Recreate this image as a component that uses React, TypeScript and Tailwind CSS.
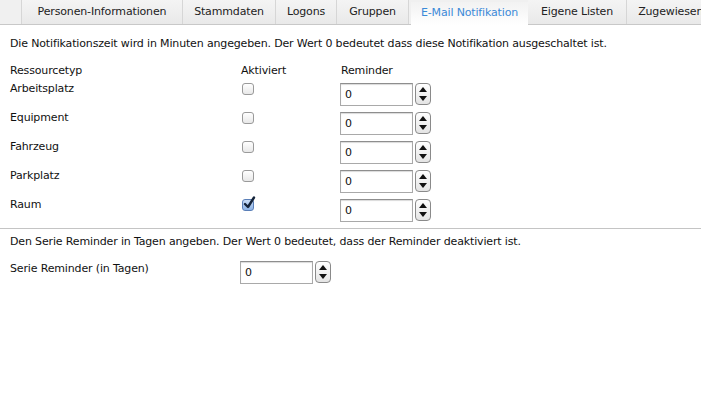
import React from "react";

const tabs = [
  { label: "Personen-Informationen", w: "w-[161px]" },
  { label: "Stammdaten", w: "w-[93px]" },
  { label: "Logons", w: "w-[61px]" },
  { label: "Gruppen", w: "w-[72px]" },
  { label: "E-Mail Notifikation", w: "w-[117px]", active: true },
  { label: "Eigene Listen", w: "w-[99px]" },
  { label: "Zugewiesene Ressourcen", w: "w-[160px]" },
];

const rows = [
  { name: "Arbeitsplatz", checked: false },
  { name: "Equipment", checked: false },
  { name: "Fahrzeug", checked: false },
  { name: "Parkplatz", checked: false },
  { name: "Raum", checked: true },
];

function Spinner() {
  return (
    <div className="flex h-[22px] w-[16px] flex-col items-center justify-between rounded-[4px] border border-[#8a8a8a] bg-gradient-to-b from-[#ffffff] to-[#e4e4e4] py-[3px]">
      <svg width="8" height="5" viewBox="0 0 8 5"><path d="M4 0 L8 5 L0 5 Z" fill="#111" /></svg>
      <svg width="8" height="5" viewBox="0 0 8 5"><path d="M0 0 L8 0 L4 5 Z" fill="#111" /></svg>
    </div>
  );
}

function NumInput({ w }: { w: string }) {
  return (
    <div className="flex items-start gap-[2px]">
      <div className={`${w} flex h-[23px] items-center border border-[#a9a9a9] border-t-[#8e8e8e] bg-white pl-[4px] pt-[2px] shadow-[inset_0_1px_1px_rgba(0,0,0,0.15)]`}>
        0
      </div>
      <Spinner />
    </div>
  );
}

function Checkbox({ checked }: { checked: boolean }) {
  if (checked) {
    return (
      <div className="relative h-[12px] w-[12px] rounded-[3px] border border-[#5a7fb8] bg-gradient-to-b from-[#c9dcf5] to-[#8db3e6]">
        <svg className="absolute left-[0px] top-[-4px]" width="13" height="14" viewBox="0 0 13 14">
          <path d="M2 8 L5 11 L11 1.5" stroke="#15243a" strokeWidth="2.4" fill="none" strokeLinecap="round" strokeLinejoin="round" />
        </svg>
      </div>
    );
  }
  return (
    <div className="h-[12px] w-[12px] rounded-[3px] border border-[#9a9a9a] bg-gradient-to-b from-[#ffffff] to-[#e8e8e8]" />
  );
}

export default function App() {
  return (
    <div className="h-[402px] w-[701px] overflow-hidden bg-white text-[11px] tracking-[-0.15px] text-[#111] [font-family:'DejaVu_Sans',Verdana,sans-serif]">
      <div className="flex h-[25px] border-b border-[#c8c8c8] bg-[#f0f0f0]">
        <div className="w-[22px] shrink-0 border-r border-[#d6d6d6]" />
        {tabs.map((t) => (
          <div
            key={t.label}
            className={`${t.w} flex shrink-0 items-center justify-center whitespace-nowrap ${
              t.active
                ? "mb-[-1px] ml-[2px] mt-[2px] bg-gradient-to-b from-[#f2f2f2] to-[#ffffff] pb-[1px] text-[#3b8ad8]"
                : "border-r border-[#d6d6d6] bg-gradient-to-b from-[#f4f4f4] to-[#e9e9e9] text-[#222]"
            }`}
          >
            {t.label}
          </div>
        ))}
      </div>
      <div className="px-[10px] pt-[11px]">Die Notifikationszeit wird in Minuten angegeben. Der Wert 0 bedeutet dass diese Notifikation ausgeschaltet ist.</div>
      <div className="flex px-[10px] pt-[10px]">
        <div className="w-[231px]">Ressourcetyp</div>
        <div className="w-[100px]">Aktiviert</div>
        <div>Reminder</div>
      </div>
      <div className="flex flex-col gap-[6px] pt-[1px]">
        {rows.map((r) => (
          <div key={r.name} className="flex h-[23px] px-[10px]">
            <div className="w-[232px] pt-[1px]">{r.name}</div>
            <div className="w-[98px] pt-[3px]">
              <Checkbox checked={r.checked} />
            </div>
            <div className="pt-[3px]">
              <NumInput w="w-[73px]" />
            </div>
          </div>
        ))}
      </div>
      <div className="mt-[9px] border-t border-[#c4c4c4]" />
      <div className="px-[10px] pt-[5px]">Den Serie Reminder in Tagen angeben. Der Wert 0 bedeutet, dass der Reminder deaktiviert ist.</div>
      <div className="flex px-[10px] pt-[10px]">
        <div className="w-[230px]">Serie Reminder (in Tagen)</div>
        <NumInput w="w-[73px]" />
      </div>
    </div>
  );
}
